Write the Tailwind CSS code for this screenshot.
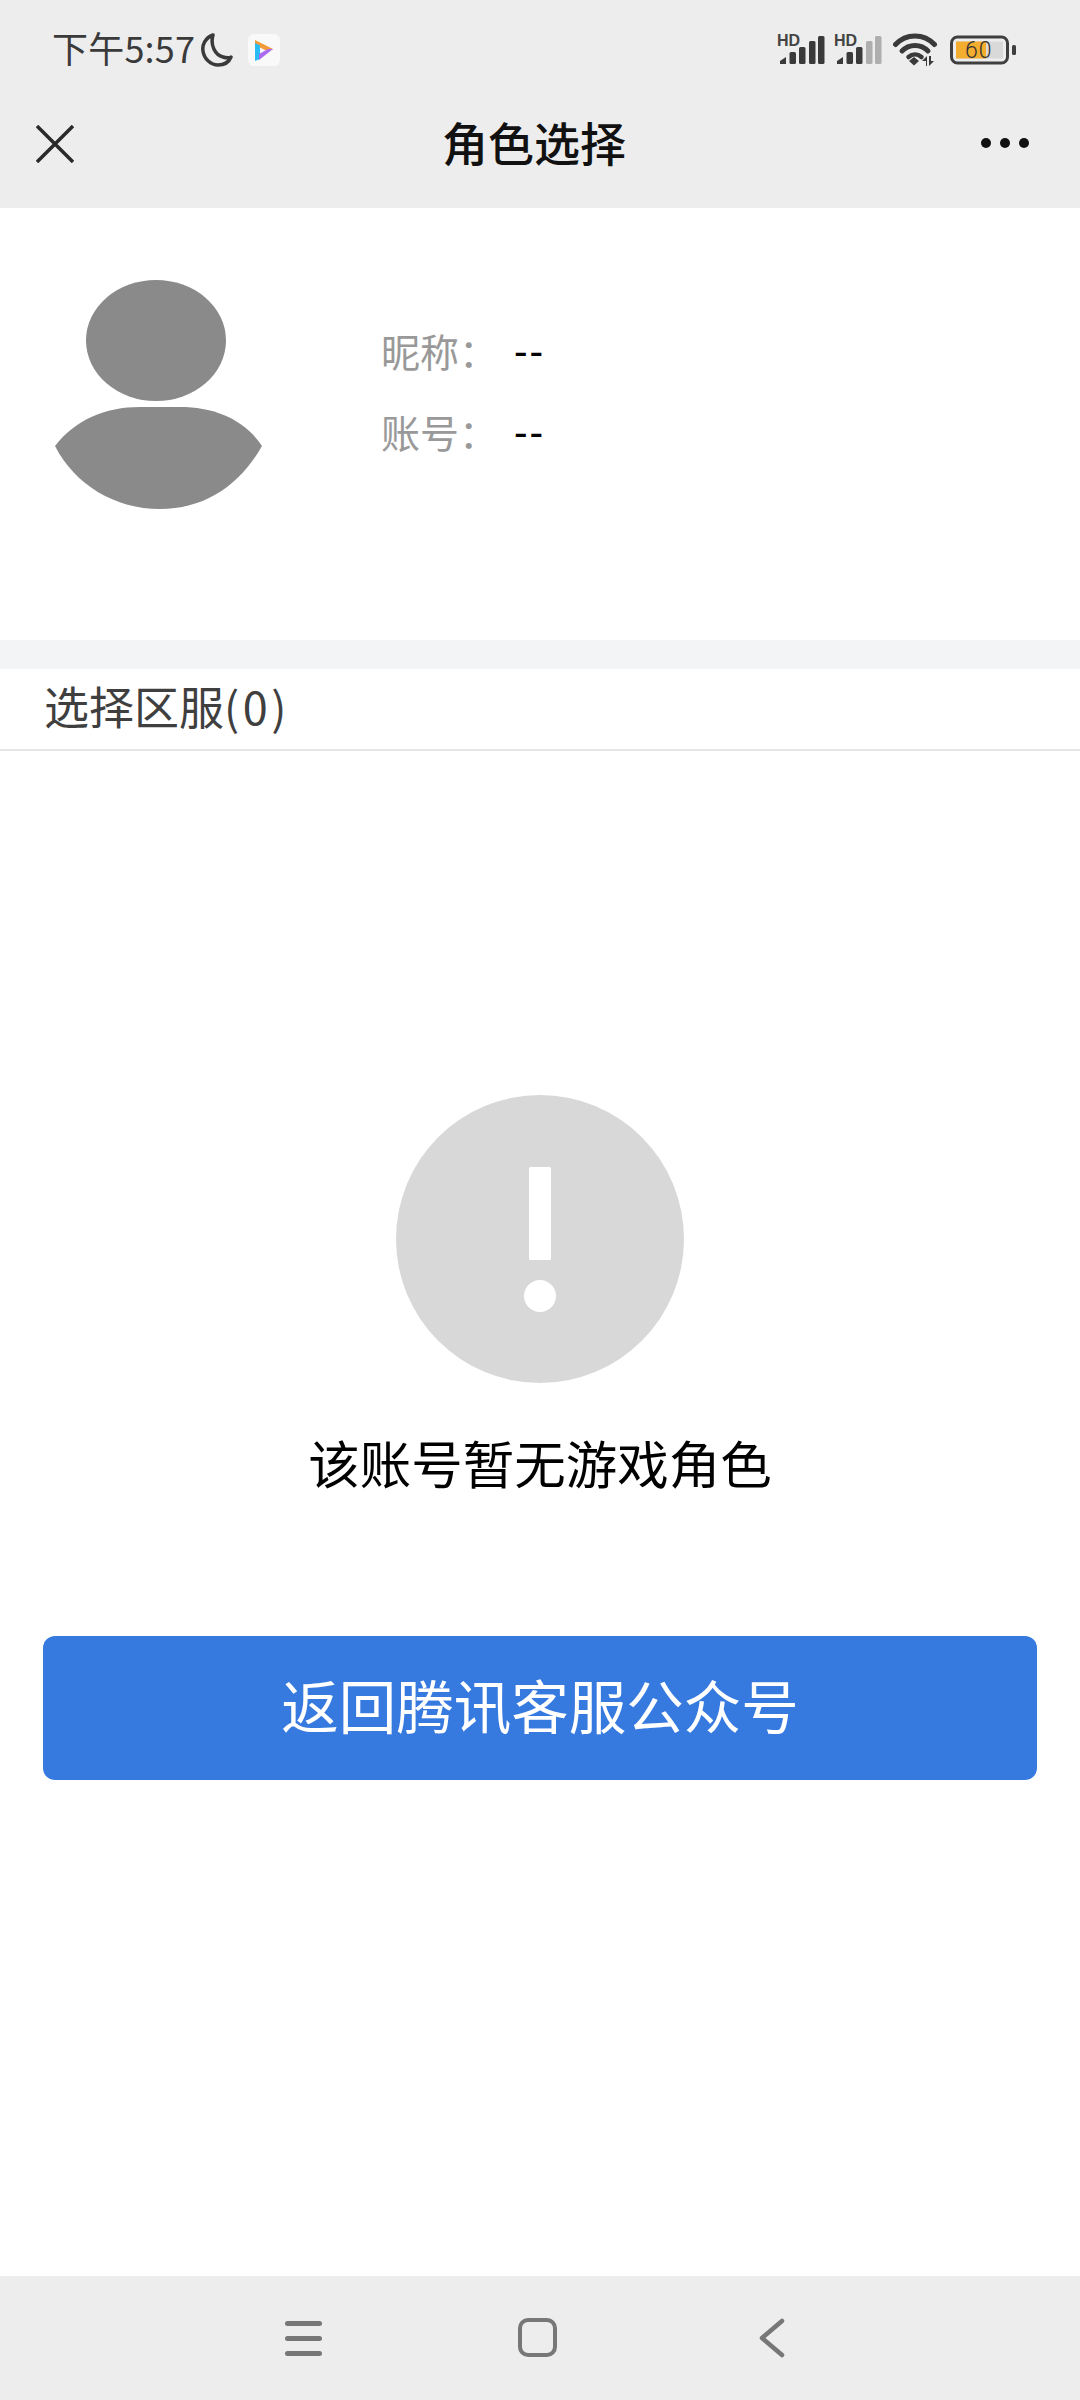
<!DOCTYPE html>
<html lang="zh-CN">

<head>
  <meta charset="UTF-8">
  <meta name="viewport" content="width=device-width, initial-scale=1.0">
  <title>角色选择</title>
  <script src="https://cdn.jsdelivr.net/npm/@tailwindcss/browser@4"></script>
</head>

<body class="bg-white">
  <div class="flex flex-col w-[1080px] h-[2400px] overflow-hidden bg-white font-['Noto_Sans_CJK_SC','Noto_Sans',sans-serif]">

    <!-- status bar + title bar -->
    <header class="h-[208px] shrink-0 bg-[#ededed]">
      <div class="flex items-center h-[100px] pl-[52px] pr-[64px]">
        <span class="pb-[6px] text-[36px] leading-none tracking-[0.2px] text-[#3a3a3a] font-['Noto_Sans_CJK_SC','Roboto',sans-serif]">下午5:57</span>
        <svg class="ml-[5px]" width="33" height="34" viewBox="0 0 33 34" fill="none">
          <path d="M13 2C5 5 2 12 3 18c1 8 8 14 15 14 6 0 11-3 13-8-1 1-5 1-8 0C15 22 10 12 13 2Z" stroke="#3a3a3a" stroke-width="3.500" stroke-linejoin="round" />
        </svg>
        <div class="ml-[15px] flex items-center justify-center w-[32px] h-[32px] rounded-[6px] bg-[#f9f9f9]">
          <svg width="20" height="22" viewBox="0 0 20 22" fill="none">
            <path d="M1 1l18 9-5 2.500L1 6Z" fill="#f39a38" />
            <path d="M1 4l5 2.500V20l-5 2Z" fill="#2bbcf3" />
            <path d="M19 10l-14 11v-6l9-5Z" fill="#a96cf0" />
          </svg>
        </div>
        <div class="ml-auto flex items-center">
          <svg class="overflow-visible" width="48" height="32" viewBox="0 0 48 32">
            <text x="0" y="12" font-size="16" font-weight="700" fill="#444" font-family="Liberation Sans">HD</text>
            <path d="M3 30v-3l6-4v7Z" fill="#3a3a3a" />
            <rect x="12.500" y="18" width="6.500" height="12" rx="1.500" fill="#3a3a3a" />
            <rect x="22" y="13" width="6.500" height="17" rx="1.500" fill="#3a3a3a" />
            <rect x="32" y="7" width="6.500" height="23" rx="1.500" fill="#3a3a3a" />
            <rect x="41" y="2" width="6.500" height="28" rx="1.500" fill="#3a3a3a" />
          </svg>
          <svg class="ml-[9px] overflow-visible" width="48" height="32" viewBox="0 0 48 32">
            <text x="0" y="12" font-size="16" font-weight="700" fill="#444" font-family="Liberation Sans">HD</text>
            <path d="M3 30v-3l6-4v7Z" fill="#3a3a3a" />
            <rect x="12.500" y="18" width="6.500" height="12" rx="1.500" fill="#3a3a3a" />
            <rect x="22" y="13" width="6.500" height="17" rx="1.500" fill="#3a3a3a" />
            <rect x="32" y="7" width="6.500" height="23" rx="1.500" fill="#aeaeae" />
            <rect x="41" y="2" width="6.500" height="28" rx="1.500" fill="#aeaeae" />
          </svg>
          <svg class="ml-[11px]" width="44" height="34" viewBox="0 0 44 34" fill="none">
            <path d="M2.500 11.500C13 0 31 0 41.500 11.500" stroke="#3a3a3a" stroke-width="5" stroke-linecap="round" />
            <path d="M9 18C16 10.500 28 10.500 35 18" stroke="#3a3a3a" stroke-width="5" stroke-linecap="round" />
            <path d="M15.500 24c4-3.500 9-3.500 13 0" stroke="#3a3a3a" stroke-width="4.500" stroke-linecap="round" />
            <path d="M16 28l5-4 5 4-5 4.500Z" fill="#3a3a3a" />
            <path d="M33 33v-5h-4l5-5v10Z" fill="#3a3a3a" />
            <path d="M36 23v10l5-5h-3v-5Z" fill="#3a3a3a" />
          </svg>
          <svg class="ml-[13px]" width="66" height="30" viewBox="0 0 66 30" fill="none">
            <rect x="1.500" y="2" width="56" height="26" rx="6" stroke="#3f3f3f" stroke-width="3" />
            <rect x="6" y="6.500" width="47" height="17" fill="#d9d9d9" />
            <rect x="6" y="6.500" width="30" height="17" fill="#f3ae2f" />
            <rect x="62" y="10" width="4" height="10" rx="1.500" fill="#3f3f3f" />
            <text x="15" y="23" font-size="23" letter-spacing="1" font-weight="300" fill="#333" font-family="Roboto">60</text>
          </svg>
        </div>
      </div>
      <nav class="relative flex items-center justify-center h-[86px]">
        <button class="absolute left-[36px] top-[25px]">
          <svg class="block" width="38" height="38" viewBox="0 0 38 38" fill="none" stroke="#2a2a2a" stroke-width="3.500">
            <path d="M1 1l36 36M37 1L1 37" />
          </svg>
        </button>
        <h1 class="pb-[5px] ml-[-12px] text-[46px] leading-none font-medium text-[#111]">角色选择</h1>
        <div class="absolute right-[51px] top-[38px] flex gap-[9px]">
          <span class="w-[10px] h-[10px] rounded-full bg-[#111]"></span>
          <span class="w-[10px] h-[10px] rounded-full bg-[#111]"></span>
          <span class="w-[10px] h-[10px] rounded-full bg-[#111]"></span>
        </div>
      </nav>
    </header>

    <!-- profile -->
    <section class="flex h-[432px] shrink-0 pt-[72px] pl-[55px]">
      <svg class="shrink-0" width="207" height="229" viewBox="0 0 207 229" fill="#8a8a8a">
        <ellipse cx="101" cy="60.500" rx="70" ry="60.500" />
        <path d="M0 166C20 140 50 127 85 127L125 127C160 127 190 140 207 166C185 205 150 229 105 229C60 229 20 205 0 166Z" />
      </svg>
      <div class="ml-[119px] pt-[33px]">
        <div class="flex items-center h-[81px] pb-[6px]">
          <span class="w-[133px] text-[39px] leading-none text-[#999]">昵称：</span>
          <span class="pb-[4px] text-[38px] leading-none font-medium tracking-[2px] text-black">--</span>
        </div>
        <div class="flex items-center h-[81px] pb-[6px]">
          <span class="w-[133px] text-[39px] leading-none text-[#999]">账号：</span>
          <span class="pb-[4px] text-[38px] leading-none font-medium tracking-[2px] text-black">--</span>
        </div>
      </div>
    </section>

    <div class="h-[29px] shrink-0 bg-[#f3f4f6]"></div>

    <h2 class="flex items-center h-[82px] shrink-0 pl-[44px] pb-[8px] border-b-2 border-[#e5e5e5] text-[45px] leading-none text-[#3f3f3f]">选择区服<span class="tracking-[3.500px]">(0)</span></h2>

    <!-- empty state -->
    <main class="flex-1 flex flex-col items-center pt-[344px]">
      <svg width="288" height="288" viewBox="0 0 288 288">
        <circle cx="144" cy="144" r="144" fill="#d8d8d8" />
        <rect x="133" y="72" width="22" height="93" rx="1.500" fill="#fff" />
        <circle cx="144" cy="201" r="16" fill="#fff" />
      </svg>
      <p class="flex items-center h-[80px] mt-[42px] pb-[6px] text-[51.500px] leading-none text-black">该账号暂无游戏角色</p>
      <button class="flex items-center justify-center w-[994px] h-[144px] mt-[131px] pb-[6px] rounded-[12px] bg-[#367ae0] text-[57.500px] leading-none text-white">返回腾讯客服公众号</button>
    </main>

    <!-- system nav -->
    <footer class="relative h-[124px] shrink-0 bg-[#ededed]">
      <div class="absolute left-[285px] top-[45px] flex flex-col gap-[10px]">
        <span class="w-[37px] h-[5px] rounded-full bg-[#777]"></span>
        <span class="w-[37px] h-[5px] rounded-full bg-[#777]"></span>
        <span class="w-[37px] h-[5px] rounded-full bg-[#777]"></span>
      </div>
      <div class="absolute left-[518px] top-[42px] w-[39px] h-[39px] rounded-[10px] border-[4px] border-[#777]"></div>
      <svg class="absolute left-[758px] top-[42px]" width="27" height="40" viewBox="0 0 27 40" fill="none" stroke="#777" stroke-width="4.500" stroke-linecap="round" stroke-linejoin="round">
        <path d="M24 3L4 20l20 17" />
      </svg>
    </footer>
  </div>
</body>

</html>
